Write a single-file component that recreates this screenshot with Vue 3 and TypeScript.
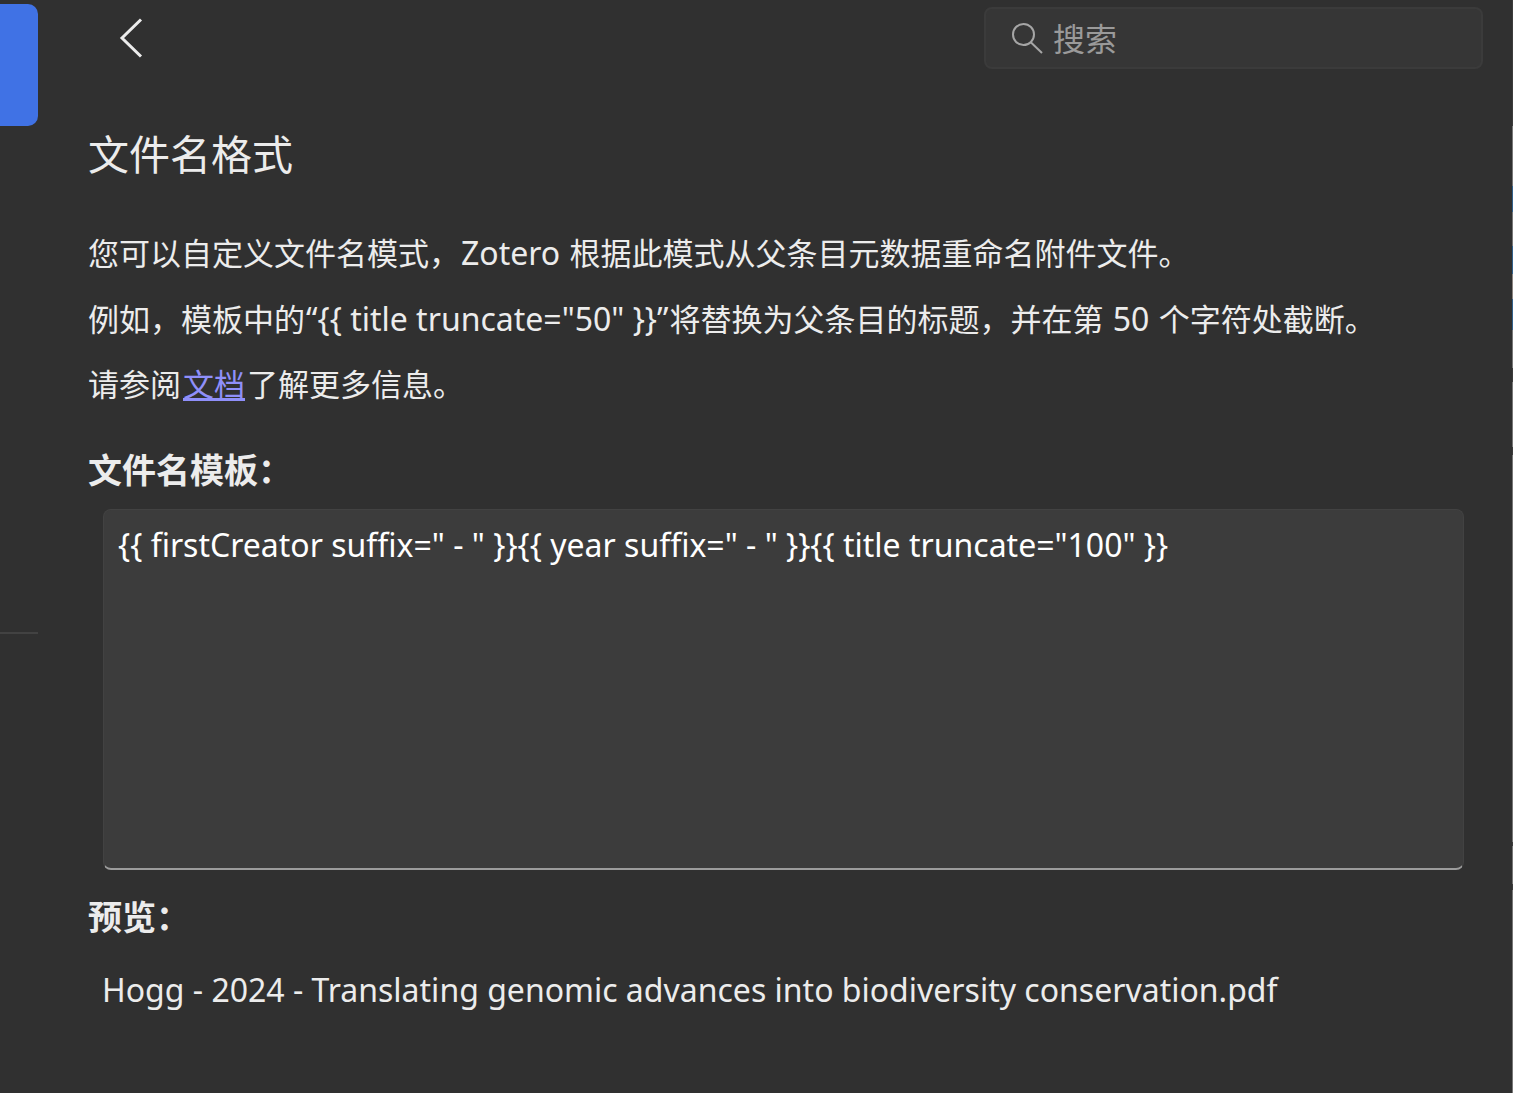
<script setup lang="ts">
import { ref } from 'vue'

const search = ref('')
const template = ref('{{ firstCreator suffix=" - " }}{{ year suffix=" - " }}{{ title truncate="100" }}')
const sample = '{{ title truncate="50" }}'
const preview = 'Hogg - 2024 - Translating genomic advances into biodiversity conservation.pdf'
</script>

<template>
  <div class="window">
    <nav class="sidebar">
      <div class="active-item"></div>
      <hr class="divider" />
    </nav>
    <main class="pane">
      <header class="toolbar">
        <button class="back" type="button" aria-label="返回">
          <svg width="24" height="40" viewBox="0 0 24 40" fill="none" stroke="#ececec" stroke-width="3">
            <path d="M22 1.5 3 20l19 18.5" />
          </svg>
        </button>
        <label class="search">
          <svg width="32" height="32" viewBox="0 0 32 32" fill="none" stroke="#a6a6a6" stroke-width="2">
            <circle cx="12.500" cy="12.500" r="10.500" />
            <path d="M19.500 20 31 31" />
          </svg>
          <input v-model="search" type="search" placeholder="搜索" aria-label="搜索" />
        </label>
      </header>
      <section class="content">
        <h1>文件名格式</h1>
        <p>您可以自定义文件名模式，<span class="latin">Zotero </span>根据此模式从父条目元数据重命名附件文件。</p>
        <p>例如，模板中的<span class="latin">“{{ sample }}”</span>将替换为父条目的标题，并在第<span class="latin"> 50 </span>个字符处截断。</p>
        <p>请参阅<a href="#">文档</a>了解更多信息。</p>
        <h2><label for="template">文件名模板：</label></h2>
        <textarea id="template" v-model="template" spellcheck="false"></textarea>
        <h2 class="preview-title">预览：</h2>
        <div class="preview">{{ preview }}</div>
      </section>
    </main>
    <div class="edge"></div>
  </div>
</template>

<style>
body {
  margin: 0;
  background: #303030;
}
</style>

<style scoped>
.window {
  display: flex;
  min-height: 100vh;
  background: #303030;
  color: #ececec;
  font-family: "Noto Sans", "Noto Sans CJK SC", sans-serif;
  font-size: 31px;
}
.sidebar {
  flex: none;
  width: 38px;
  padding-top: 4px;
}
.active-item {
  height: 122px;
  border-radius: 0 10px 10px 0;
  background: #4072e5;
}
.divider {
  height: 2px;
  margin: 506px 0 0;
  border: 0;
  background: #424242;
}
.pane {
  flex: 1;
  min-width: 0;
}
.toolbar {
  display: flex;
  justify-content: space-between;
  padding: 7px 29px 0 81px;
}
.back {
  display: flex;
  align-items: center;
  height: 62px;
  padding: 0;
  border: 0;
  background: none;
}
.search {
  box-sizing: border-box;
  display: flex;
  align-items: center;
  gap: 10px;
  width: 499px;
  height: 62px;
  padding: 0 25px;
  border: 2px solid #3b3b3b;
  border-radius: 8px;
  background: #363636;
}
.search input {
  flex: 1;
  min-width: 0;
  padding: 0;
  border: 0;
  outline: 0;
  background: none;
  color: #ececec;
  font: inherit;
  font-size: 32px;
}
.search input::placeholder {
  color: #9a9a9a;
}
.content {
  padding: 55px 48px 48px 50px;
}
h1 {
  margin: 0 0 36px;
  font-size: 41px;
  font-weight: 400;
  line-height: 60px;
}
p {
  margin: 0;
  line-height: 65px;
}
.latin,
.preview,
textarea {
  font-family: "Noto Sans", "Noto Sans CJK SC", sans-serif;
  font-size: 32px;
}
.latin {
  margin: 0 1px;
}
a {
  margin: 0 2px;
  color: #8f8ffa;
}
h2 {
  margin: 28px 0 14px;
  font-size: 34px;
  font-weight: 700;
  line-height: 50px;
}
textarea {
  box-sizing: border-box;
  display: block;
  width: calc(100% - 15px);
  height: 361px;
  margin: 0 0 0 15px;
  padding: 13px 14px;
  border: 1px solid #424242;
  border-bottom: 2px solid #9c9c9c;
  border-radius: 8px;
  outline: 0;
  resize: none;
  background: #3c3c3c;
  color: #fff;
  line-height: 44px;
}
.preview-title {
  margin: 22px 0 26px;
}
.preview {
  margin-left: 14px;
  line-height: 44px;
}
.edge {
  flex: none;
  width: 1px;
  background: linear-gradient(#3c3c3c 126px, #777 126px 186px, #32608a 186px 212px, #777 212px 246px, #32608a 246px 274px, #8a8480 274px 299px, #32608a 299px 330px, #777 330px 368px, #3c3c3c 368px 382px, #777 382px 447px, #3c3c3c 447px 455px, #777 455px 842px, #3c3c3c 842px 846px, #777 846px 884px, #3c3c3c 884px 890px, #777 890px);
}
</style>
